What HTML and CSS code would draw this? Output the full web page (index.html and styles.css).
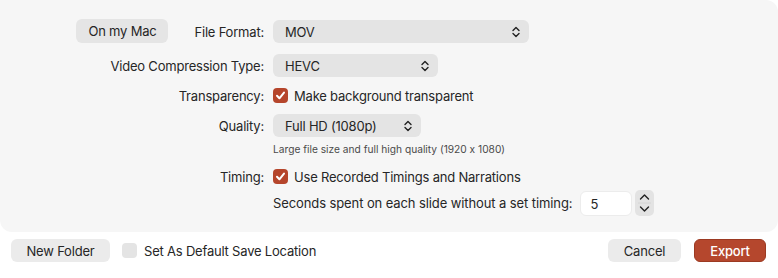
FILE: index.html
```html
<!DOCTYPE html>
<html lang="en">
  <head>
    <meta charset="UTF-8" />
    <meta name="viewport" content="width=device-width, initial-scale=1.0" />
    <title>Export</title>
    <link rel="stylesheet" href="styles.css">
  </head>
  <body>
    <div class="panel">
      <div class="row row-format">
        <div class="label label-first">
          <button class="btn">On my Mac</button>
          <span>File Format:</span>
        </div>
        <div class="select select-wide">
          <span>MOV</span>
          <svg class="chev" width="8" height="12" viewBox="0 0 8 12"><path d="M1 4.5L4 1.5L7 4.5M1 7.5L4 10.5L7 7.5" fill="none" stroke="#222" stroke-width="1.4" stroke-linecap="round" stroke-linejoin="round"/></svg>
        </div>
      </div>

      <div class="row row-codec">
        <div class="label">Video Compression Type:</div>
        <div class="select select-codec">
          <span>HEVC</span>
          <svg class="chev" width="8" height="12" viewBox="0 0 8 12"><path d="M1 4.5L4 1.5L7 4.5M1 7.5L4 10.5L7 7.5" fill="none" stroke="#222" stroke-width="1.4" stroke-linecap="round" stroke-linejoin="round"/></svg>
        </div>
      </div>

      <div class="row row-check">
        <div class="label">Transparency:</div>
        <label class="check">
          <span class="box checked">
            <svg width="11" height="11" viewBox="0 0 11 11"><path d="M2 5.8L4.4 8.3L9 2.6" fill="none" stroke="#fff" stroke-width="2" stroke-linecap="round" stroke-linejoin="round"/></svg>
          </span>
          Make background transparent
        </label>
      </div>

      <div class="row row-quality">
        <div class="label">Quality:</div>
        <div class="select select-quality">
          <span>Full HD (1080p)</span>
          <svg class="chev" width="8" height="12" viewBox="0 0 8 12"><path d="M1 4.5L4 1.5L7 4.5M1 7.5L4 10.5L7 7.5" fill="none" stroke="#222" stroke-width="1.4" stroke-linecap="round" stroke-linejoin="round"/></svg>
        </div>
      </div>

      <div class="row row-hint">
        <div class="label"></div>
        <div class="hint">Large file size and full high quality (1920 x 1080)</div>
      </div>

      <div class="row row-timing">
        <div class="label">Timing:</div>
        <label class="check">
          <span class="box checked">
            <svg width="11" height="11" viewBox="0 0 11 11"><path d="M2 5.8L4.4 8.3L9 2.6" fill="none" stroke="#fff" stroke-width="2" stroke-linecap="round" stroke-linejoin="round"/></svg>
          </span>
          Use Recorded Timings and Narrations
        </label>
      </div>

      <div class="row row-seconds">
        <div class="label"></div>
        <div class="seconds">
          <span>Seconds spent on each slide without a set timing:</span>
          <div class="num">5</div>
          <div class="stepper">
            <svg width="19" height="26" viewBox="0 0 19 26"><path d="M5.5 9L9.5 5L13.5 9M5.5 17L9.5 21L13.5 17" fill="none" stroke="#222" stroke-width="1.4" stroke-linecap="round" stroke-linejoin="round"/><path d="M3 13H16" stroke="#d4d4d4" stroke-width="1"/></svg>
          </div>
        </div>
      </div>
    </div>

    <div class="footer">
      <div class="footer-left">
        <button class="btn btn-folder">New Folder</button>
        <label class="check">
          <span class="box"></span>
          Set As Default Save Location
        </label>
      </div>
      <div class="footer-right">
        <button class="btn btn-cancel">Cancel</button>
        <button class="btn btn-export">Export</button>
      </div>
    </div>
  </body>
</html>
```

FILE: styles.css
```css
body {
  margin: 0;
  background: #fff;
  color: #262626;
  font-family: Inter, "Liberation Sans", sans-serif;
  font-size: 13px;
  letter-spacing: -0.2px;
  font-feature-settings: "calt" 0;
  width: 778px;
  height: 278px;
  overflow: hidden;
}

.panel {
  background: #f6f6f6;
  border-radius: 0 12px 12px 12px;
  padding: 20px 0 16px;
  height: 196px;
}

.row {
  display: flex;
  align-items: center;
  gap: 9px;
}

.label {
  width: 264px;
  flex-shrink: 0;
  text-align: right;
}

.label-first {
  display: flex;
  justify-content: flex-end;
  align-items: center;
  gap: 26px;
}

.row-format {
  height: 23px;
}
.row-codec {
  height: 23px;
  margin-top: 11px;
}
.row-check {
  height: 17px;
  margin-top: 10px;
}
.row-quality {
  height: 23px;
  margin-top: 10px;
}
.row-hint {
  height: 13px;
  margin-top: 5px;
}
.row-timing {
  height: 17px;
  margin-top: 13px;
}
.row-seconds {
  height: 26px;
  margin-top: 5px;
}

.btn {
  font-family: inherit;
  font-size: 13px;
  letter-spacing: -0.2px;
  color: #262626;
  background: #e5e5e5;
  border: none;
  border-radius: 6px;
  height: 24px;
  padding: 0;
  cursor: pointer;
}

.label-first .btn {
  width: 92px;
  margin-bottom: 1px;
}

.select {
  display: flex;
  align-items: center;
  justify-content: space-between;
  height: 23px;
  box-sizing: border-box;
  padding: 0 9px 0 12px;
  background: #e4e4e4;
  border-radius: 6px;
}

.select-wide {
  width: 256px;
}
.select-codec {
  width: 165px;
}
.select-quality {
  width: 148px;
}

.check {
  display: flex;
  align-items: center;
  gap: 6px;
}

.box {
  width: 15px;
  height: 15px;
  border-radius: 4px;
  background: #e4e4e4;
  display: flex;
  align-items: center;
  justify-content: center;
  box-sizing: border-box;
}

.box.checked {
  background: #b5452b;
}

.hint {
  font-size: 10.2px;
  letter-spacing: 0;
  color: #4a4a4a;
}

.seconds {
  display: flex;
  align-items: center;
}

.seconds span {
  letter-spacing: -0.1px;
}

.num {
  width: 52px;
  height: 25px;
  box-sizing: border-box;
  margin-left: 8px;
  padding-left: 9px;
  line-height: 24px;
  background: #fff;
  border: 1px solid #ececec;
  border-radius: 6px;
}

.stepper {
  width: 19px;
  height: 26px;
  margin-left: 3px;
  background: #e3e3e3;
  border-radius: 5px;
}

.stepper svg {
  display: block;
}

.footer {
  display: flex;
  justify-content: space-between;
  align-items: center;
  padding: 7px 12px 0 11px;
}

.footer-left {
  display: flex;
  align-items: center;
  gap: 12px;
}

.footer-left .check {
  gap: 7px;
}

.footer-right {
  display: flex;
  gap: 13px;
}

.btn-folder {
  width: 99px;
  height: 23px;
  background: #ebebeb;
}

.btn-cancel {
  width: 73px;
  height: 23px;
  background: #ebebeb;
}

.btn-export {
  width: 72px;
  height: 23px;
  background: #b5472d;
  border: 1px solid #9c3a22;
  color: #fff;
  font-weight: 500;
}
```
